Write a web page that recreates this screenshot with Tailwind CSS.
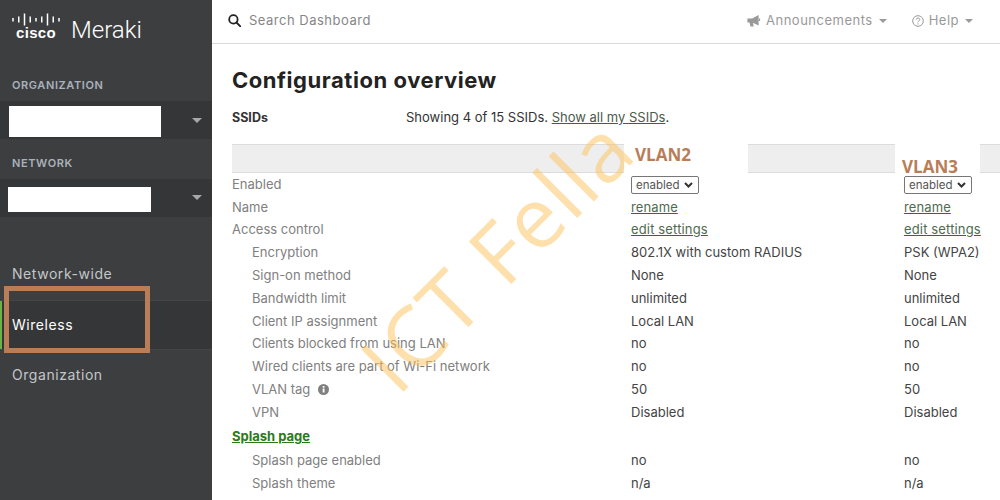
<!DOCTYPE html>
<html lang="en">
  <head>
    <meta charset="UTF-8" />
    <title>Configuration overview</title>
    <script src="https://cdn.jsdelivr.net/npm/@tailwindcss/browser@4"></script>
  </head>
  <body class="bg-white font-['Inter',sans-serif] overflow-hidden">
    <div class="relative flex w-[1000px] h-[500px] overflow-hidden">
      <!-- Sidebar -->
      <aside class="relative w-[212px] shrink-0 bg-[#3d3e40] flex flex-col">
        <div class="h-[71px] pl-[12px] pt-[13px] flex items-start">
          <div class="w-[48px] flex flex-col items-center">
            <svg width="48" height="13" viewBox="0 0 48 13">
              <path d="M1 5v3.500M6.750 3.500v6M12.500 0.500v12M18.250 3.500v6M24 5v3.500M29.750 3.500v6M35.500 0.500v12M41.250 3.500v6M47 5v3.500" stroke="#fff" stroke-width="1.500" fill="none" />
            </svg>
            <span class="font-['Liberation_Sans',sans-serif] font-bold text-[15px] leading-[13px] tracking-[0.3px] text-white">cisco</span>
          </div>
          <span class="ml-[11px] mt-[5px] font-['Roboto',sans-serif] font-light text-[24px] leading-[24px] text-white">Meraki</span>
        </div>
        <div class="h-[30px] pl-[12px] pb-[2px] flex items-center text-[11px] font-semibold tracking-[0.6px] text-[#a9b2ba]">ORGANIZATION</div>
        <div class="h-[38px] bg-[#353638] flex items-start pt-[5px] pl-[9px]">
          <div class="w-[152px] h-[31px] bg-white"></div>
          <div class="ml-[31px] mt-[12px] w-0 h-0 border-x-[5px] border-x-transparent border-t-[5px] border-t-[#a8a8a8]"></div>
        </div>
        <div class="h-[40px] pl-[12px] pt-[8px] flex items-center text-[11px] font-semibold tracking-[0.6px] text-[#a9b2ba]">NETWORK</div>
        <div class="h-[38px] bg-[#353638] flex items-start pt-[8px] pl-[8px]">
          <div class="w-[143px] h-[25px] bg-white"></div>
          <div class="ml-[41px] mt-[8px] w-0 h-0 border-x-[5px] border-x-transparent border-t-[5px] border-t-[#a8a8a8]"></div>
        </div>
        <div class="h-[33px]"></div>
        <div class="h-[50px] pl-[12px] pb-[3px] flex items-center text-[14px] tracking-[0.55px] text-[#c3c7ca]">Network-wide</div>
        <div class="h-[50px] pl-[12px] pb-[2px] flex items-center text-[14px] tracking-[0.55px] text-white bg-[#353638] border-y border-[#444547] shadow-[inset_2px_0_0_#67b346]">Wireless</div>
        <div class="h-[50px] pl-[12px] pb-[2px] flex items-center text-[14px] tracking-[0.55px] text-[#c3c7ca]">Organization</div>
        <div class="absolute left-[4px] top-[286px] w-[146px] h-[67px] border-[5px] border-[#b97d58]"></div>
      </aside>

      <div class="flex-1 min-w-0 flex flex-col">
        <!-- Top bar -->
        <header class="h-[44px] shrink-0 border-b border-[#d9d9d9] pb-[2px] flex items-center pl-[16px]">
          <svg width="13" height="13" viewBox="0 0 13 13" fill="none" stroke="#222" stroke-width="1.800">
            <circle cx="5.400" cy="5.400" r="4.200" />
            <path d="M8.500 8.500l3.800 3.800" stroke-linecap="round" />
          </svg>
          <span class="ml-[8px] text-[13px] tracking-[0.5px] text-[#868686]">Search Dashboard</span>
          <div class="ml-auto flex items-center text-[13px] tracking-[0.5px] text-[#999]">
            <svg width="14" height="12" viewBox="0 0 14 12" fill="none" stroke="#999" stroke-width="1.200">
              <path d="M1 4h4.500L11 1v8.500L5.500 7H1zM3 7l1 4h2L5.200 7" fill="#999" />
              <path d="M12.500 3.500v2.500" />
            </svg>
            <span class="ml-[5px]">Announcements</span>
            <span class="ml-[6px] w-0 h-0 border-x-[4px] border-x-transparent border-t-[4px] border-t-[#999]"></span>
            <svg class="ml-[25px]" width="12" height="12" viewBox="0 0 12 12" fill="none" stroke="#999">
              <circle cx="6" cy="6" r="5.300" />
              <path d="M4.300 4.700c0-2.200 3.500-2.200 3.500-.1 0 1.300-1.800 1.200-1.800 2.700M6 8.300v1.200" />
            </svg>
            <span class="ml-[5px]">Help</span>
            <span class="ml-[6px] w-0 h-0 border-x-[4px] border-x-transparent border-t-[4px] border-t-[#999] mr-[27px]"></span>
          </div>
        </header>

        <!-- Content -->
        <main class="flex-1 pl-[20px]">
          <h1 class="mt-[21px] h-[30px] text-[22px] leading-[30px] font-bold tracking-[0.55px] text-[#222]">Configuration overview</h1>
          <div class="mt-[12px] h-[22px] flex items-center text-[13px] text-[#333]">
            <span class="w-[174px] font-bold text-[12.500px]">SSIDs</span>
            <span>Showing 4 of 15 SSIDs. <a class="text-[#4a5a4a] underline decoration-[#1f7a1f]">Show all my SSIDs</a>.</span>
          </div>

          <!-- Column band -->
          <div class="mt-[15px] h-[29px] flex">
            <div class="w-[392px] bg-[#eeeeee] border-y border-[#dcdcdc]"></div>
            <div class="w-[124px] pl-[11px] font-['Open_Sans',sans-serif] font-bold text-[17px] leading-[22px] text-[#b97d58]">VLAN2</div>
            <div class="w-[147px] bg-[#eeeeee] border-y border-[#dcdcdc]"></div>
            <div class="w-[85px] pl-[7px] pt-[12px] font-['Open_Sans',sans-serif] font-bold text-[17px] leading-[22px] text-[#b97d58] whitespace-nowrap">VLAN3</div>
            <div class="w-[20px] bg-[#eeeeee] border-y border-[#dcdcdc]"></div>
          </div>

          <!-- Rows -->
          <div class="mt-[0.2px] grid grid-cols-[399px_273px_96px] auto-rows-[22.800px] items-center text-[13px] text-[#808080] whitespace-nowrap">
            <div>Enabled</div>
            <div><span class="inline-flex items-center justify-between w-[68px] h-[18px] pl-[4px] pr-[5px] border border-[#777] rounded-[2px] bg-white text-[11.500px] text-[#555]">enabled <svg width="9" height="6" viewBox="0 0 9 6" fill="none" stroke="#333" stroke-width="2"><path d="M1 1l3.500 3.500L8 1" /></svg></span></div>
            <div><span class="inline-flex items-center justify-between w-[68px] h-[18px] pl-[4px] pr-[5px] border border-[#777] rounded-[2px] bg-white text-[11.500px] text-[#555]">enabled <svg width="9" height="6" viewBox="0 0 9 6" fill="none" stroke="#333" stroke-width="2"><path d="M1 1l3.500 3.500L8 1" /></svg></span></div>

            <div>Name</div>
            <div><a class="text-[#4f6b4f] tracking-[0.1px] underline decoration-[#1f7a1f]">rename</a></div>
            <div><a class="text-[#4f6b4f] tracking-[0.1px] underline decoration-[#1f7a1f]">rename</a></div>

            <div>Access control</div>
            <div><a class="text-[#4f6b4f] tracking-[0.15px] underline decoration-[#1f7a1f]">edit settings</a></div>
            <div><a class="text-[#4f6b4f] tracking-[0.15px] underline decoration-[#1f7a1f]">edit settings</a></div>

            <div class="pl-[20px]">Encryption</div>
            <div class="text-[#444]">802.1X with custom RADIUS</div>
            <div class="text-[#444]">PSK (WPA2)</div>

            <div class="pl-[20px]">Sign-on method</div>
            <div class="text-[#444]">None</div>
            <div class="text-[#444]">None</div>

            <div class="pl-[20px]">Bandwidth limit</div>
            <div class="text-[#444]">unlimited</div>
            <div class="text-[#444]">unlimited</div>

            <div class="pl-[20px]">Client IP assignment</div>
            <div class="text-[#444]">Local LAN</div>
            <div class="text-[#444]">Local LAN</div>

            <div class="pl-[20px]">Clients blocked from using LAN</div>
            <div class="text-[#444]">no</div>
            <div class="text-[#444]">no</div>

            <div class="pl-[20px]">Wired clients are part of Wi-Fi network</div>
            <div class="text-[#444]">no</div>
            <div class="text-[#444]">no</div>

            <div class="pl-[20px] flex items-center">VLAN tag
              <svg class="ml-[8px]" width="11" height="11" viewBox="0 0 11 11"><circle cx="5.500" cy="5.500" r="5.500" fill="#808080" /><rect x="4.700" y="4.500" width="1.800" height="4" fill="#fff" /><rect x="4.700" y="2" width="1.800" height="1.700" fill="#fff" /></svg>
            </div>
            <div class="text-[#444]">50</div>
            <div class="text-[#444]">50</div>

            <div class="pl-[20px]">VPN</div>
            <div class="text-[#444]">Disabled</div>
            <div class="text-[#444]">Disabled</div>
          </div>

          <div class="h-[25.500px] pt-[1px] flex items-center font-bold text-[13px] text-[#2b7a1a] underline">Splash page</div>

          <div class="grid grid-cols-[399px_273px_96px] auto-rows-[22.800px] items-center text-[13px] text-[#808080] whitespace-nowrap">
            <div class="pl-[20px]">Splash page enabled</div>
            <div class="text-[#444]">no</div>
            <div class="text-[#444]">no</div>

            <div class="pl-[20px]">Splash theme</div>
            <div class="text-[#444]">n/a</div>
            <div class="text-[#444]">n/a</div>
          </div>
        </main>
      </div>

      <!-- Watermark -->
      <div class="absolute left-[496px] top-[254px] -translate-x-1/2 -translate-y-1/2 -rotate-45 font-['Open_Sans',sans-serif] font-medium text-[84px] leading-none tracking-[2px] text-[#fdc25a]/50 whitespace-nowrap pointer-events-none">ICT Fella</div>
    </div>
  </body>
</html>
